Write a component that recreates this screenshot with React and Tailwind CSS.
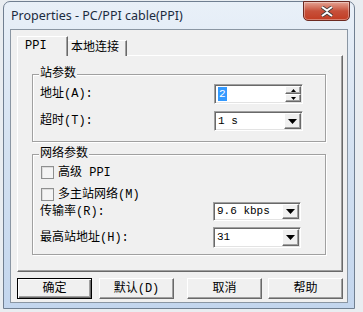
const dlgFont = { fontFamily: '"Liberation Mono", "Noto Sans CJK SC", monospace' };

const sunken =
  "border border-t-[#a0a0a0] border-l-[#a0a0a0] border-r-white border-b-white shadow-[inset_1px_1px_0_#696969,inset_-1px_-1px_0_#e3e3e3]";
const raised =
  "border border-t-white border-l-white border-r-[#696969] border-b-[#696969] shadow-[inset_-1px_-1px_0_#a0a0a0]";

const DownArrow = () => (
  <svg width="9" height="5" viewBox="0 0 9 5">
    <path d="M0 0h9L4.5 5z" fill="#000" />
  </svg>
);

const Combo = ({ value, className = "" }) => (
  <div className={`flex h-full bg-white ${sunken} ${className}`}>
    <span className="flex-1 pl-[3px] text-[11px] leading-none flex items-center">{value}</span>
    <div className={`w-[17px] my-[1px] mr-[1px] bg-[#f0f0f0] flex items-center justify-center ${raised}`}>
      <DownArrow />
    </div>
  </div>
);

const Spin = ({ value }) => (
  <div className={`flex h-full bg-white ${sunken}`}>
    <span className="flex-1 pl-[3px] flex items-center">
      <span className="bg-[#3399ff] text-white text-[11px] leading-[14px] px-[1px]">{value}</span>
    </span>
    <div className="w-[16px] my-[1px] mr-[1px] flex flex-col">
      <div className={`flex-1 bg-[#f0f0f0] flex items-center justify-center ${raised}`}>
        <svg width="5" height="3" viewBox="0 0 5 3"><path d="M2.5 0L5 3H0z" fill="#000" /></svg>
      </div>
      <div className={`flex-1 bg-[#f0f0f0] flex items-center justify-center ${raised}`}>
        <svg width="5" height="3" viewBox="0 0 5 3"><path d="M0 0h5L2.5 3z" fill="#000" /></svg>
      </div>
    </div>
  </div>
);

const Group = ({ title, className = "", children }) => (
  <div
    className={`relative border border-[#a0a0a0] shadow-[inset_1px_1px_0_#fff,1px_1px_0_#fff] ${className}`}
  >
    <span className="absolute left-[6px] top-[-8px] bg-[#f0f0f0] px-[1px] leading-[14px]">{title}</span>
    {children}
  </div>
);

const Check = ({ label }) => (
  <div className="flex items-center h-[13px]">
    <div className="w-[13px] h-[13px] border border-[#8e8f8f] bg-[#f4f4f4] shadow-[inset_1px_1px_0_#dcdcdc]" />
    <span className="ml-[4px] leading-none">{label}</span>
  </div>
);

const Button = ({ label, isDefault, className = "" }) => (
  <div
    className={`h-[21px] w-[75px] bg-[#f0f0f0] flex items-center justify-center ${
      isDefault
        ? "border border-black shadow-[inset_1px_1px_0_#fff,inset_-1px_-1px_0_#696969,inset_-2px_-2px_0_#a0a0a0]"
        : "border border-t-white border-l-white border-r-[#696969] border-b-[#696969] shadow-[inset_-1px_-1px_0_#a0a0a0]"
    } ${className}`}
  >
    {label}
  </div>
);

export default function App() {
  return (
    <div className="w-[363px] h-[312px] bg-[#e9edf1] overflow-hidden pt-[1px] pl-[3px]">
      <div className="w-[352px] h-[308px] rounded-t-[7px] border border-[#707f91] bg-gradient-to-b from-[#e9f0f8] via-[#d3e1f1] to-[#c3d6ee] flex flex-col px-[6px] pb-[5px] relative">
        {/* title bar */}
        <div className="h-[27px] flex items-center pl-[1px]">
          <span
            className="text-[12.5px] text-[#1b2b3e] mt-[1px]"
            style={{ fontFamily: '"Noto Sans", "Open Sans", sans-serif' }}
          >
            Properties - PC/PPI cable(PPI)
          </span>
        </div>
        <div className="absolute right-[4px] top-[-1px] w-[47px] h-[20px] rounded-b-[5px] border border-[#6c2a22] bg-gradient-to-b from-[#e3a394] via-[#c7503a] to-[#c23c22] flex items-center justify-center shadow-[inset_0_0_0_1px_rgba(255,255,255,0.35)]">
          <svg width="14" height="11" viewBox="0 0 14 11">
            <path
              d="M2 1l5 3.6L12 1M2 10l5-3.6 5 3.6"
              stroke="#3a3a3a"
              strokeWidth="3.6"
              fill="none"
            />
            <path
              d="M2 1l5 3.6L12 1M2 10l5-3.6 5 3.6"
              stroke="#fff"
              strokeWidth="2"
              fill="none"
            />
          </svg>
        </div>

        {/* client area */}
        <div
          className="flex-1 border border-[#8a96a3] bg-[#f0f0f0] text-[12px] text-black flex flex-col"
          style={dlgFont}
        >
          {/* tabs */}
          <div className="flex items-end h-[20px] mt-[6px] ml-[6px] relative z-10">
            <div className="h-[20px] w-[51px] bg-[#f0f0f0] border-t border-l border-t-white border-l-white border-r border-r-[#696969] shadow-[inset_-1px_0_0_#a0a0a0] pl-[7px] pt-[2px] leading-[14px]">
              PPI
            </div>
            <div className="h-[16px] w-[59px] bg-[#f0f0f0] border-t border-t-white border-r border-r-[#696969] shadow-[inset_-1px_0_0_#a0a0a0] pl-[3px] leading-[14px]">
              本地连接
            </div>
          </div>
          <div className="ml-[6px] mt-[-1px] w-[326px] h-[217px] border border-t-white border-l-white border-r-[#696969] border-b-[#696969] shadow-[inset_-1px_-1px_0_#a0a0a0] flex flex-col pl-[14px]">
            <Group title="站参数" className="mt-[18px] w-[294px] h-[68px]">
              <div className="flex items-center h-[20px] mt-[9px] pl-[7px]">
                <span>地址(A):</span>
                <div className="ml-auto mr-[22px] w-[89px] h-full">
                  <Spin value="2" />
                </div>
              </div>
              <div className="flex items-center h-[20px] mt-[7px] pl-[7px]">
                <span>超时(T):</span>
                <div className="ml-auto mr-[22px] w-[89px] h-full">
                  <Combo value="1 s" />
                </div>
              </div>
            </Group>
            <Group title="网络参数" className="mt-[12px] w-[294px] h-[101px]">
              <div className="pl-[8px] mt-[11px]">
                <Check label="高级 PPI" />
              </div>
              <div className="pl-[8px] mt-[9px]">
                <Check label="多主站网络(M)" />
              </div>
              <div className="flex items-center h-[19px] mt-[1px] pl-[7px]">
                <span>传输率(R):</span>
                <div className="ml-auto mr-[24px] w-[88px] h-full">
                  <Combo value="9.6 kbps" />
                </div>
              </div>
              <div className="flex items-center h-[21px] mt-[6px] pl-[7px]">
                <span>最高站地址(H):</span>
                <div className="ml-auto mr-[24px] w-[88px] h-full">
                  <Combo value="31" />
                </div>
              </div>
            </Group>
          </div>
          {/* buttons */}
          <div className="flex mt-[6px] ml-[6px]">
            <Button label="确定" isDefault />
            <Button label="默认(D)" className="ml-[7px]" />
            <Button label="取消" className="ml-[13px]" />
            <Button label="帮助" className="ml-[6px]" />
          </div>
        </div>
      </div>
    </div>
  );
}
